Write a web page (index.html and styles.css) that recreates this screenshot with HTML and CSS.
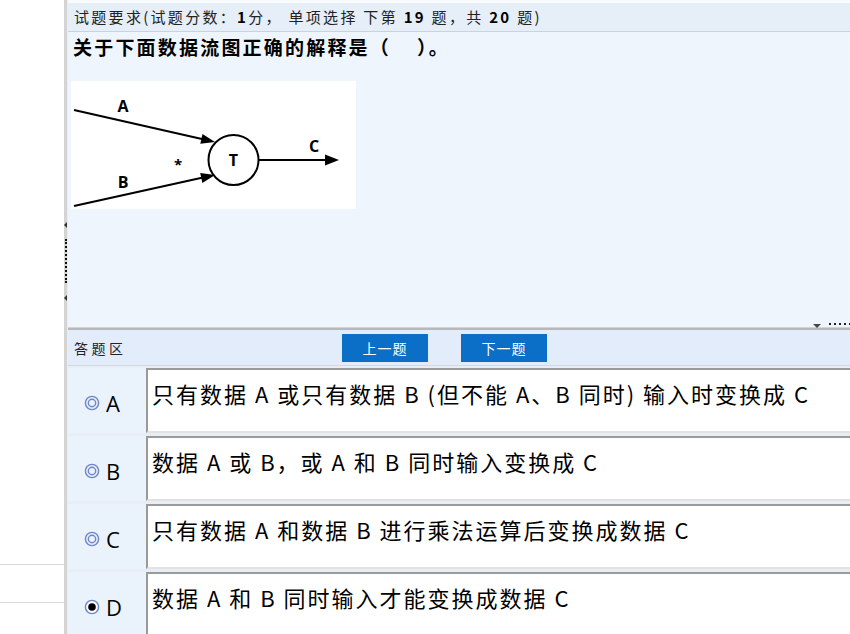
FILE: index.html
```html
<!DOCTYPE html>
<html lang="zh-CN">
<head>
<meta charset="utf-8">
<title>试题</title>
<link rel="stylesheet" href="styles.css">
</head>
<body>
<div class="app">
  <aside class="side">
    <div class="side-fill"></div>
    <div class="side-row"></div>
    <div class="side-row last"></div>
  </aside>
  <div class="divider">
    <span class="grip-arrow top"></span>
    <span class="grip-dots"></span>
    <span class="grip-arrow bottom"></span>
  </div>
  <main class="main">
    <div class="head">试题要求(试题分数：<b>1</b>分，&nbsp;单项选择 下第 <b>19</b> 题，共 <b>20</b> 题)</div>
    <section class="question">
      <h1 class="q-title">关于下面数据流图正确的解释是（&nbsp;&nbsp;&nbsp;&nbsp;）。</h1>
      <svg class="diagram" width="285" height="128" viewBox="0 0 285 128">
        <rect width="285" height="128" fill="#fff"/>
        <line x1="3" y1="29" x2="132" y2="58.3" stroke="#000" stroke-width="2"/>
        <polygon points="144,61 131.5,53 129.3,62.8" fill="#000"/>
        <line x1="3" y1="125" x2="132" y2="96.6" stroke="#000" stroke-width="2"/>
        <polygon points="144,94 131.4,101.9 129.2,92.1" fill="#000"/>
        <circle cx="162.5" cy="79" r="25" fill="#fff" stroke="#000" stroke-width="2"/>
        <line x1="188" y1="79" x2="256" y2="79" stroke="#000" stroke-width="2"/>
        <polygon points="268,79 254,73.5 254,84.5" fill="#000"/>
        <text x="52" y="31" class="lbl">A</text>
        <text x="52" y="107" class="lbl">B</text>
        <text x="243" y="71" class="lbl">C</text>
        <text x="162.5" y="85" class="lbl">T</text>
        <text x="107" y="89" class="lbl star">*</text>
      </svg>
    </section>
    <div class="splitter"><span class="split-mark"><span class="tri"></span><span class="dots"></span></span></div>
    <div class="ans-head">
      <span class="ans-title">答题区</span>
      <button class="btn">上一题</button>
      <button class="btn">下一题</button>
    </div>
    <div class="options">
      <div class="opt">
        <label class="opt-key">
          <svg class="radio" width="16" height="16" viewBox="0 0 16 16"><circle cx="8" cy="8" r="6.6" fill="none" stroke="#6f84c9" stroke-width="1.4"/><circle cx="8" cy="8" r="3.7" fill="none" stroke="#6f84c9" stroke-width="1.4"/></svg>
          <span>A</span>
        </label>
        <div class="opt-box">只有数据 A 或只有数据 B (但不能 A、B 同时) 输入时变换成 C</div>
      </div>
      <div class="opt">
        <label class="opt-key">
          <svg class="radio" width="16" height="16" viewBox="0 0 16 16"><circle cx="8" cy="8" r="6.6" fill="none" stroke="#6f84c9" stroke-width="1.4"/><circle cx="8" cy="8" r="3.7" fill="none" stroke="#6f84c9" stroke-width="1.4"/></svg>
          <span>B</span>
        </label>
        <div class="opt-box">数据 A 或 B，或 A 和 B 同时输入变换成 C</div>
      </div>
      <div class="opt">
        <label class="opt-key">
          <svg class="radio" width="16" height="16" viewBox="0 0 16 16"><circle cx="8" cy="8" r="6.6" fill="none" stroke="#6f84c9" stroke-width="1.4"/><circle cx="8" cy="8" r="3.7" fill="none" stroke="#6f84c9" stroke-width="1.4"/></svg>
          <span>C</span>
        </label>
        <div class="opt-box">只有数据 A 和数据 B 进行乘法运算后变换成数据 C</div>
      </div>
      <div class="opt">
        <label class="opt-key">
          <svg class="radio" width="16" height="16" viewBox="0 0 16 16"><circle cx="8" cy="8" r="6.6" fill="#fff" stroke="#6f84c9" stroke-width="1.4"/><circle cx="8" cy="8" r="3.8" fill="#000"/></svg>
          <span>D</span>
        </label>
        <div class="opt-box">数据 A 和 B 同时输入才能变换成数据 C</div>
      </div>
    </div>
  </main>
</div>
</body>
</html>
```
FILE: styles.css
```css
* { box-sizing: border-box; }
html, body {
  margin: 0;
  padding: 0;
  width: 850px;
  height: 634px;
  overflow: hidden;
  background: #fff;
  font-family: "Noto Sans CJK SC", "Noto Sans", sans-serif;
  color: #000;
}
.app {
  position: relative;
  display: flex;
  width: 850px;
  height: 634px;
  overflow: hidden;
}
.side {
  width: 64px;
  flex: none;
  display: flex;
  flex-direction: column;
  background: #fff;
}
.side-fill { height: 565px; flex: none; border-bottom: 1px solid #d9d9d9; }
.side-row { height: 38px; flex: none; border-bottom: 1px solid #d9d9d9; }
.side-row.last { border-bottom: none; flex: 1; }

.divider {
  position: relative;
  width: 4px;
  flex: none;
  background: #d4d4d4;
  border-right: 1px solid #ececec;
}
.grip-arrow {
  position: absolute;
  left: 0;
  width: 0;
  height: 0;
  border-top: 3px solid transparent;
  border-bottom: 3px solid transparent;
  border-right: 3px solid #333;
}
.grip-arrow.top { top: 222px; }
.grip-arrow.bottom { top: 295px; }
.grip-dots {
  position: absolute;
  left: 1px;
  top: 239px;
  width: 2px;
  height: 44px;
  border-left: 2px dotted #111;
}

.main {
  flex: 1;
  display: flex;
  flex-direction: column;
  min-width: 0;
  background: #eef5fd;
  overflow: hidden;
}
.main > * { flex: none; }
.head {
  height: 32px;
  padding: 3px 0 0 6px;
  background: linear-gradient(#f7fafe 0 3px, #e6eef8 3px);
  border-bottom: 1px solid #c9d3df;
  font-size: 15px;
  letter-spacing: 2.3px;
  line-height: 27px;
  color: #222;
  white-space: nowrap;
}
.head b { font-weight: 700; color: #000; }
.question {
  height: 295px;
  padding: 0 0 0 3px;
  display: flex;
  flex-direction: column;
  align-items: flex-start;
}
.q-title {
  margin: 2px 0 0 2px;
  font-size: 19px;
  letter-spacing: 2.2px;
  line-height: 25px;
  font-weight: 700;
  white-space: nowrap;
}
.diagram {
  display: block;
  margin-top: 22px;
}
.lbl {
  font-family: "Open Sans", "Noto Sans", sans-serif;
  font-weight: 700;
  font-size: 16px;
  text-anchor: middle;
  fill: #000;
}
.lbl.star { font-size: 15px; }

.splitter {
  position: relative;
  height: 3px;
  background: linear-gradient(#d0d4d9 0 1px, #b8b8b8 1px 3px);
}
.split-mark {
  position: absolute;
  right: 0;
  top: -4px;
  display: flex;
  align-items: flex-start;
  gap: 8px;
}
.split-mark .tri {
  width: 0;
  height: 0;
  margin-top: 1px;
  border-left: 4px solid transparent;
  border-right: 4px solid transparent;
  border-top: 4px solid #444;
}
.split-mark .dots {
  width: 21px;
  height: 2px;
  background: repeating-linear-gradient(to right, #222 0 2px, transparent 2px 5px);
}
.ans-head {
  height: 36px;
  display: flex;
  align-items: center;
  background: #e2ecfa;
  border-bottom: 1px solid #d4d9e0;
  padding-left: 6px;
}
.ans-title {
  width: 268px;
  font-size: 14px;
  letter-spacing: 3.5px;
  color: #222;
}
.btn {
  width: 86px;
  height: 28px;
  margin-right: 33px;
  border: none;
  background: #0b6fc7;
  color: #fff;
  font-family: "Noto Sans CJK SC", sans-serif;
  font-size: 14px;
  letter-spacing: 1px;
  padding: 0;
}
.options {
  display: flex;
  flex-direction: column;
  gap: 3px;
  padding-top: 2px;
  background: #e8eef5;
}
.opt {
  height: 65px;
  flex: none;
  display: flex;
  background: #eaf3fc;
}
.opt-key {
  width: 78px;
  flex: none;
  display: flex;
  align-items: center;
  padding: 4px 0 0 16px;
  gap: 6px;
  font-size: 22px;
  line-height: 24px;
}
.opt-key span { font-family: "Open Sans", sans-serif; }
.radio { display: block; flex: none; }
.opt-box {
  flex: 1;
  background: #fff;
  border-top: 2px solid #9a9a9a;
  border-left: 2px solid #9a9a9a;
  border-bottom: 2px solid #e2e2e2;
  padding: 8px 0 0 4px;
  font-size: 22px;
  letter-spacing: 2px;
  line-height: 30px;
  white-space: nowrap;
  overflow: hidden;
}
```
